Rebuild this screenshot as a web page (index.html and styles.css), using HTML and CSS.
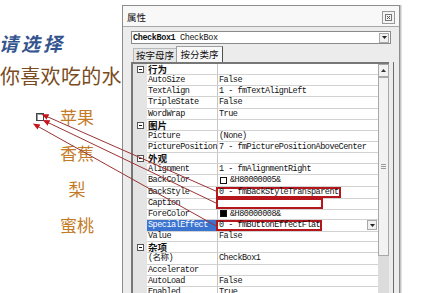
FILE: index.html
```html
<!DOCTYPE html>
<html>
<head>
<meta charset="utf-8">
<link rel="stylesheet" href="styles.css">
</head>
<body>
<div class="left">
  <div class="ask">请选择</div>
  <div class="question">你喜欢吃的水果</div>
  <div class="options">
    <span class="check"></span><span class="fruit">苹果</span>
    <span></span><span class="fruit">香蕉</span>
    <span></span><span class="fruit">梨</span>
    <span></span><span class="fruit">蜜桃</span>
  </div>
</div>
<div class="win">
  <div class="titlebar"><span class="wtitle">属性</span><span class="close"><svg width="7" height="7" viewBox="0 0 7 7"><rect x="0.5" y="0.5" width="6" height="6" fill="none" stroke="#777"/><path d="M2 2L5 5M5 2L2 5" stroke="#555"/></svg></span></div>
  <div class="wbody">
    <div class="combo"><span class="ctext"><b>CheckBox1</b> CheckBox</span><span class="cbtn"><svg width="5" height="3" viewBox="0 0 5 3"><path d="M0 0H5L2.5 3Z" fill="#222"/></svg></span></div>
    <div class="tabs"><span class="tab">按字母序</span><span class="tab sel">按分类序</span></div>
    <div class="grid">
      <div class="rows">
        <div class="row head"><span class="gut"><i class="minus"></i></span><span class="nm">行为</span><span class="vl"></span></div>
        <div class="row"><span class="gut"></span><span class="nm">AutoSize</span><span class="vl">False</span></div>
        <div class="row"><span class="gut"></span><span class="nm">TextAlign</span><span class="vl">1 - fmTextAlignLeft</span></div>
        <div class="row"><span class="gut"></span><span class="nm">TripleState</span><span class="vl">False</span></div>
        <div class="row"><span class="gut"></span><span class="nm">WordWrap</span><span class="vl">True</span></div>
        <div class="row head"><span class="gut"><i class="minus"></i></span><span class="nm">图片</span><span class="vl"></span></div>
        <div class="row"><span class="gut"></span><span class="nm">Picture</span><span class="vl">(None)</span></div>
        <div class="row"><span class="gut"></span><span class="nm">PicturePosition</span><span class="vl">7 - fmPicturePositionAboveCenter</span></div>
        <div class="row head"><span class="gut"><i class="minus"></i></span><span class="nm">外观</span><span class="vl"></span></div>
        <div class="row"><span class="gut"></span><span class="nm">Alignment</span><span class="vl">1 - fmAlignmentRight</span></div>
        <div class="row"><span class="gut"></span><span class="nm">BackColor</span><span class="vl"><i class="sw white"></i>&amp;H80000005&amp;</span></div>
        <div class="row"><span class="gut"></span><span class="nm">BackStyle</span><span class="vl"><span class="hl hl-a">0 - fmBackStyleTransparent</span></span></div>
        <div class="row"><span class="gut"></span><span class="nm">Caption</span><span class="vl"><span class="hl hl-b"></span></span></div>
        <div class="row"><span class="gut"></span><span class="nm">ForeColor</span><span class="vl"><i class="sw black"></i>&amp;H80000008&amp;</span></div>
        <div class="row"><span class="gut"></span><span class="nm selnm">SpecialEffect</span><span class="vl split"><span class="hl hl-c">0 - fmButtonEffectFlat</span><span class="dd"><svg width="5" height="3" viewBox="0 0 5 3"><path d="M0 0H5L2.5 3Z" fill="#222"/></svg></span></span></div>
        <div class="row"><span class="gut"></span><span class="nm">Value</span><span class="vl">False</span></div>
        <div class="row head"><span class="gut"><i class="minus"></i></span><span class="nm">杂项</span><span class="vl"></span></div>
        <div class="row"><span class="gut"></span><span class="nm cjkname">(名称)</span><span class="vl">CheckBox1</span></div>
        <div class="row"><span class="gut"></span><span class="nm">Accelerator</span><span class="vl"></span></div>
        <div class="row"><span class="gut"></span><span class="nm">AutoLoad</span><span class="vl">False</span></div>
        <div class="row"><span class="gut"></span><span class="nm">Enabled</span><span class="vl">True</span></div>
      </div>
      <div class="scroll">
        <div class="up"><svg width="5" height="3" viewBox="0 0 5 3"><path d="M0 3H5L2.5 0Z" fill="#333"/></svg></div>
        <div class="thumb"><i class="grip"></i></div>
      </div>
    </div>
  </div>
</div>
<svg class="arrows" width="428" height="293" viewBox="0 0 428 293">
  <defs>
    <marker id="ah" markerWidth="8" markerHeight="8" refX="0" refY="3" orient="auto-start-reverse" markerUnits="userSpaceOnUse">
      <path d="M0 0L7 3L0 6Z" fill="#c4141c"/>
    </marker>
  </defs>
  <line x1="48" y1="117" x2="218" y2="192" stroke="#9a3232" stroke-width="1" marker-start="url(#ah)"/>
  <line x1="49" y1="123" x2="218" y2="204" stroke="#9a3232" stroke-width="1" marker-start="url(#ah)"/>
  <line x1="39" y1="127" x2="218" y2="227" stroke="#9a3232" stroke-width="1" marker-start="url(#ah)"/>
</svg>
</body>
</html>
```
FILE: styles.css
```css
* { box-sizing: border-box; }
html, body { margin: 0; padding: 0; }
body {
  width: 428px;
  height: 293px;
  overflow: hidden;
  background: #ffffff;
  display: flex;
  align-items: flex-start;
  position: relative;
  font-family: "Liberation Mono", monospace;
}

/* left slide area */
.left {
  width: 122px;
  flex: none;
  height: 293px;
  overflow: hidden;
}
.ask {
  margin: 31px 0 0 -1px;
  font: italic 600 19px/24px "Noto Sans CJK SC", sans-serif;
  color: #34548f;
  letter-spacing: 3px;
  white-space: nowrap;
}
.question {
  margin-top: 8px;
  font: 400 20px/26px "Noto Sans CJK SC", sans-serif;
  color: #7a4a20;
  white-space: nowrap;
  letter-spacing: 0.3px;
}
.options {
  margin: 10px 0 0 36px;
  display: grid;
  grid-template-columns: 8px 36px;
  column-gap: 15px;
  grid-auto-rows: 36px;
  align-items: center;
}
.check {
  width: 8px;
  height: 8px;
  border: 1px solid #444;
  background: #fff;
  box-shadow: inset 1px 1px 0 #9a9a9a;
}
.fruit {
  font: 400 17px/36px "Noto Sans CJK SC", sans-serif;
  color: #c47b28;
  text-align: center;
  white-space: nowrap;
}

/* properties window */
.win {
  flex: none;
  width: 278px;
  height: 300px;
  margin-top: 5px;
  border: 1px solid #8c8c8c;
  background: #ececec;
  box-shadow: 1px 0 0 #c4c4c4, 2px 0 0 #e2e2e2;
}
.titlebar {
  height: 21px;
  display: flex;
  justify-content: space-between;
  align-items: flex-start;
  padding: 0 4px;
  background: #f8f8f8;
  border-bottom: 1px solid #a8a8a8;
}
.wtitle {
  font: 400 9.5px/20px "Noto Sans CJK SC", sans-serif;
  color: #111;
  margin-top: 1px;
}
.close {
  margin-top: 5px;
  width: 13px;
  height: 13px;
  border: 1px solid #9a9a9a;
  background: #f4f4f4;
  display: flex;
  align-items: center;
  justify-content: center;
}
.wbody {
  padding: 4px 8px 0 8px;
}
.combo {
  height: 13px;
  border: 1px solid #8a8a8a;
  background: #fff;
  display: flex;
  align-items: center;
  justify-content: space-between;
  padding-left: 1px;
}
.ctext {
  font-size: 8.5px;
  letter-spacing: -0.4px;
  color: #111;
  white-space: nowrap;
}
.cbtn {
  width: 10px;
  height: 10px;
  margin-right: 1px;
  border: 1px solid #a8a8a8;
  background: #f0f0f0;
  display: flex;
  align-items: center;
  justify-content: center;
}
.tabs {
  margin-top: 2px;
  height: 16px;
  display: flex;
  align-items: flex-end;
  padding-left: 2px;
}
.tab {
  width: 43px;
  height: 14px;
  border-top: 1px solid #b8b8b8;
  border-left: 1px solid #b8b8b8;
  background: #e6e6e6;
  font: 400 9.5px/13px "Noto Sans CJK SC", sans-serif;
  color: #111;
  text-align: center;
  white-space: nowrap;
}
.tab.sel {
  width: 47px;
  height: 16px;
  background: #f8f8f8;
  border: 1px solid #a0a0a0;
  border-right: 1px solid #505050;
  border-bottom: none;
  line-height: 15px;
}
.grid {
  width: 258px;
  height: 240px;
  display: flex;
  border-top: 2px solid #777;
  border-left: 2px solid #777;
  background: #fff;
  box-shadow: 4px 0 0 #ececec, 5px 0 0 #6a6a6a;
}
.rows {
  flex: 1;
  overflow: hidden;
}
.row {
  height: 11.15px;
  display: grid;
  grid-template-columns: 14px 71px 1fr;
  font-size: 8.5px;
  letter-spacing: -0.5px;
  color: #111;
}
.gut {
  background: #e4e4e4;
  display: flex;
  align-items: center;
  justify-content: center;
}
.nm, .vl {
  border-bottom: 1px solid #d2d2d2;
  line-height: 10px;
  white-space: nowrap;
  overflow: hidden;
}
.nm {
  padding-left: 1px;
  border-right: 1px solid #c6c6c6;
}
.vl {
  padding-left: 1px;
  display: flex;
  align-items: center;
  overflow: visible;
}
.head .nm {
  font: 700 9.5px/10px "Noto Sans CJK SC", sans-serif;
  letter-spacing: 0;
  overflow: visible;
}
.cjkname {
  font-family: "Liberation Mono", "Noto Sans CJK SC", monospace;
}
.minus {
  width: 7px;
  height: 7px;
  border: 1px solid #555;
  background: #fff;
  position: relative;
  display: block;
}
.minus::after {
  content: "";
  position: absolute;
  left: 1px;
  top: 2px;
  width: 3px;
  height: 1px;
  background: #111;
}
.selnm {
  background: #3a73d0;
  color: #fff;
}
.sw {
  display: inline-block;
  width: 7px;
  height: 7px;
  border: 1px solid #111;
  margin: 0 3px 0 1px;
}
.sw.white { background: #fff; }
.sw.black { background: #000; }
.hl {
  display: flex;
  align-items: center;
  height: 11px;
  margin-left: -3px;
  padding-left: 1px;
  border: 2px solid #b4161c;
  line-height: 8px;
  white-space: nowrap;
  overflow: visible;
}
.hl-a { width: 125px; }
.hl-b { width: 107px; }
.hl-c { width: 106px; }
.split { justify-content: space-between; }
.dd {
  width: 10px;
  height: 10px;
  margin-right: 1px;
  border: 1px solid #a8a8a8;
  background: #f0f0f0;
  display: flex;
  align-items: center;
  justify-content: center;
}
.scroll {
  width: 11px;
  flex: none;
  background: #dcdcdc;
}
.up {
  height: 13px;
  border: 1px solid #a8a8a8;
  background: #f2f2f2;
  display: flex;
  align-items: center;
  justify-content: center;
}
.thumb {
  height: 179px;
  border: 1px solid #a8a8a8;
  background: #f2f2f2;
  display: flex;
  align-items: center;
  justify-content: center;
}
.grip {
  display: block;
  width: 5px;
  height: 5px;
  border-top: 1px solid #999;
  border-bottom: 1px solid #999;
  background: linear-gradient(#999, #999) center / 5px 1px no-repeat;
}
.arrows {
  position: absolute;
  left: 0;
  top: 0;
  pointer-events: none;
}
```
